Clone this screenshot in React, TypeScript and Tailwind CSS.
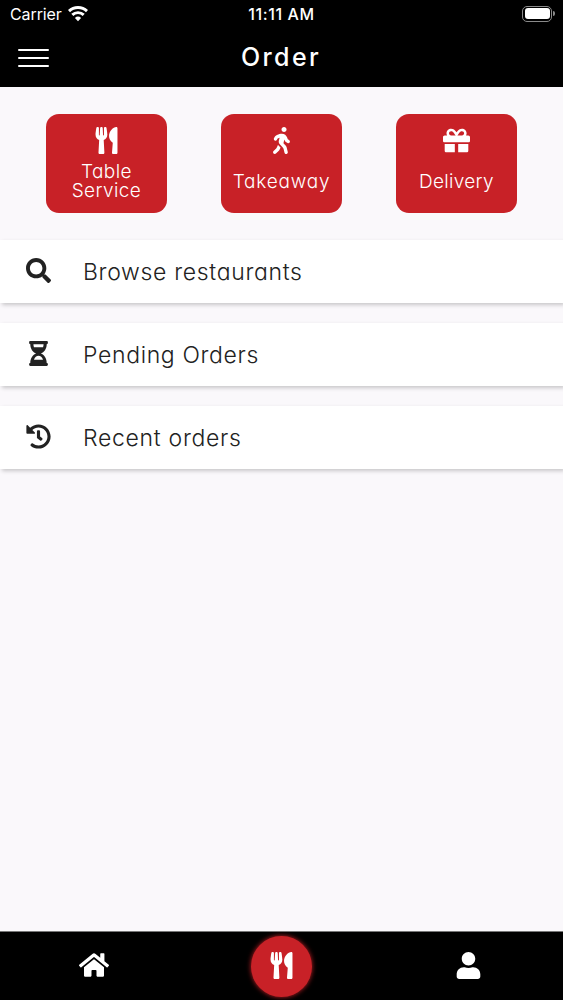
import type { IconType } from 'react-icons'
import { FaGift, FaHistory, FaHome, FaHourglassHalf, FaSearch, FaUser, FaUtensils, FaWalking } from 'react-icons/fa'

type OrderType = { lines: string[]; icon: IconType; text: string }
type MenuItem = { label: string; icon: IconType; text: string }

const orderTypes: OrderType[] = [
  { lines: ['Table', 'Service'], icon: FaUtensils, text: 'mt-[8px] tracking-[0.4px]' },
  { lines: ['Takeaway'], icon: FaWalking, text: 'mt-[18px] tracking-[0.8px]' },
  { lines: ['Delivery'], icon: FaGift, text: 'mt-[18px] tracking-[0.3px]' },
]

const menuItems: MenuItem[] = [
  { label: 'Browse restaurants', icon: FaSearch, text: 'tracking-[0.68px]' },
  { label: 'Pending Orders', icon: FaHourglassHalf, text: 'tracking-[0.65px]' },
  { label: 'Recent orders', icon: FaHistory, text: 'tracking-[0.7px]' },
]

function StatusBar() {
  return (
    <div className="grid h-[29px] grid-cols-3 items-center pr-[8px] pl-[10px] text-[16px] [font-feature-settings:normal]">
      <div className="mb-px flex items-center gap-[6px]">
        <span className="-mt-px tracking-[-0.1px]">Carrier</span>
        <svg className="h-[16px] w-[20px]" viewBox="0 0 20 16" fill="none" stroke="currentColor" strokeWidth="2.9">
          <path d="M1 5.1a13 13 0 0 1 18 0" />
          <path d="M4.3 8.9a8.2 8.2 0 0 1 11.4 0" />
          <path d="M10 15.2 6.9 11.9a4.5 4.5 0 0 1 6.2 0z" fill="currentColor" stroke="none" />
        </svg>
      </div>
      <span className="mr-[2px] mb-[2px] text-center font-medium tracking-[0.6px] whitespace-nowrap">11:11 AM</span>
      <div className="mb-[2px] flex items-center justify-end gap-px">
        <div className="h-[16px] w-[30px] rounded-[5px] border border-[#8a8a8a] p-[1.5px]">
          <div className="h-full rounded-[3px] bg-white" />
        </div>
        <div className="h-[5px] w-[2px] rounded-r-full bg-[#8a8a8a]" />
      </div>
    </div>
  )
}

function Header() {
  return (
    <header className="h-[87px] bg-black text-white">
      <StatusBar />
      <div className="grid h-[58px] grid-cols-[50px_1fr_50px] items-center pr-[19px] pl-[18px]">
        <button className="flex flex-col gap-[6px]" aria-label="Open menu">
          <span className="h-[2px] w-[31px] rounded-full bg-white" />
          <span className="h-[2px] w-[31px] rounded-full bg-white" />
          <span className="h-[2px] w-[31px] rounded-full bg-white" />
        </button>
        <h1 className="text-center text-[25px] font-medium tracking-[2.4px]">Order</h1>
      </div>
    </header>
  )
}

export default function App() {
  return (
    <div className="flex h-[1000px] w-[563px] flex-col overflow-hidden bg-[#faf8fb] font-['Inter',sans-serif] [font-feature-settings:'cv11']">
      <Header />

      <main className="flex-1">
        <div className="flex h-[153px] justify-between px-[46px] pt-[27px]">
          {orderTypes.map(({ lines, icon: Icon, text }) => (
            <button
              key={lines[0]}
              className="flex h-[99px] w-[121px] flex-col items-center rounded-[13px] bg-[#c82127] pt-[13px] text-white"
            >
              <Icon className="size-[27px] shrink-0" />
              <span className={`text-[19px] leading-[19px] font-light ${text}`}>
                {lines.map((line) => (
                  <span key={line} className="block">{line}</span>
                ))}
              </span>
            </button>
          ))}
        </div>

        <div className="flex flex-col gap-[20px]">
          {menuItems.map(({ label, icon: Icon, text }) => (
            <button
              key={label}
              className="flex h-[63px] items-center bg-white pl-[26px] text-[#222] shadow-[2px_2px_4px_rgba(0,0,0,0.2)]"
            >
              <Icon className="mb-[2px] size-[25px] shrink-0" />
              <span className={`mt-[2px] ml-[32px] text-[23px] font-light ${text}`}>{label}</span>
            </button>
          ))}
        </div>
      </main>

      <nav className="grid h-[69px] grid-cols-3 items-center justify-items-center border-t border-[#777] bg-black text-white">
        <FaHome className="mb-[2px] size-[30px]" />
        <div className="flex size-[61px] items-center justify-center rounded-full bg-[#c82127] shadow-[0_0_5px_#c82127]">
          <FaUtensils className="mb-[2px] size-[27px]" />
        </div>
        <FaUser className="mr-[2px] mb-[2px] size-[27px]" />
      </nav>
    </div>
  )
}
